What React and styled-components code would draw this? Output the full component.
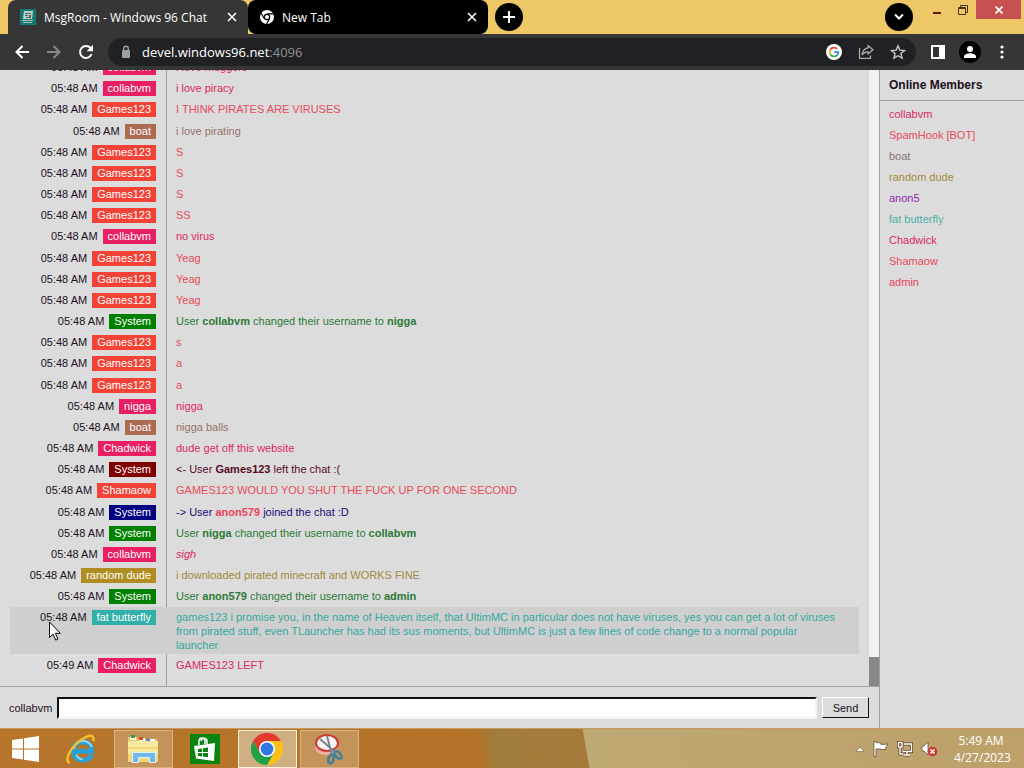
import React from 'react'
import styled, { createGlobalStyle } from 'styled-components'

const GlobalStyle = createGlobalStyle`
  * {
    box-sizing: border-box;
  }
  body {
    margin: 0;
    font-family: 'Liberation Sans', Arial, sans-serif;
    font-size: 11px;
    overflow: hidden;
  }
  button, input {
    font: inherit;
  }
`

const Screen = styled.div`
  display: flex;
  flex-direction: column;
  height: 100vh;
  background: #dcdcdc;
`

/* ---------- browser chrome ---------- */
const IconButton = styled.button`
  display: flex;
  align-items: center;
  justify-content: center;
  flex: none;
  width: ${({ $size }) => $size || 24}px;
  height: ${({ $size }) => $size || 24}px;
  padding: 0;
  border: none;
  border-radius: 50%;
  background: ${({ $filled }) => ($filled ? '#000' : 'transparent')};
  color: ${({ $color }) => $color || '#fff'};
`
const TabBar = styled.header`
  display: flex;
  flex: none;
  height: 34px;
  padding-left: 8px;
  background: #eec866;
`
const Tab = styled.div`
  display: flex;
  align-items: center;
  gap: 8px;
  width: 240px;
  height: 34px;
  padding: 0 4px 0 12px;
  border-radius: 8px 8px ${({ $active }) => ($active ? '0 0' : '8px 8px')};
  background: ${({ $active }) => ($active ? '#363636' : '#000')};
  color: #fff;
  font-family: 'Open Sans', 'Noto Sans', sans-serif;
  font-size: 12px;
`
const TabTitle = styled.span`
  flex: 1;
  white-space: nowrap;
`
const NewTab = styled.div`
  display: flex;
  align-items: center;
  padding-left: 7px;
`
const WindowButtons = styled.div`
  display: flex;
  align-items: flex-start;
  margin-left: auto;
  padding-right: 3px;
`
const SearchTabs = styled.div`
  padding: 3px 11px 0 0;
`
const WindowButton = styled.button`
  display: flex;
  align-items: center;
  justify-content: center;
  width: ${({ $close }) => ($close ? 45 : 26)}px;
  height: 19px;
  padding: 0;
  border: none;
  background: ${({ $close }) => ($close ? '#c75050' : 'transparent')};
`
const Toolbar = styled.nav`
  display: flex;
  align-items: center;
  flex: none;
  height: 36px;
  padding: 0 10px;
  gap: 8px;
  background: #363636;
`
const AddressBar = styled.div`
  display: flex;
  align-items: center;
  flex: 1;
  gap: 8px;
  height: 28px;
  margin: 0 2px;
  padding: 0 6px 0 10px;
  border-radius: 14px;
  background: #202124;
`
const Url = styled.span`
  flex: 1;
  color: #fff;
  font-family: 'Open Sans', 'Noto Sans', sans-serif;
  font-size: 13px;
  line-height: 28px;
`
const Port = styled.span`
  color: #8f9296;
`

/* ---------- chat page ---------- */
const Page = styled.main`
  display: flex;
  flex: 1;
  min-height: 0;
  color: #221022;
`
const Chat = styled.section`
  display: flex;
  flex-direction: column;
  flex: 1;
  min-width: 0;
  border-right: 1px solid #a0a0a0;
`
const LogArea = styled.div`
  display: flex;
  flex: 1;
  min-height: 0;
  border-bottom: 1px solid #a0a0a0;
`
const Log = styled.div`
  display: flex;
  flex-direction: column;
  justify-content: space-between;
  flex: 1;
  min-width: 0;
  overflow: hidden;
  padding: 0 10px;
  background: linear-gradient(
    to right,
    transparent 166px,
    #a0a0a0 166px,
    #a0a0a0 167px,
    transparent 167px
  );
`
const Row = styled.div`
  display: grid;
  grid-template-columns: 146px 1fr;
  column-gap: 20px;
  flex: none;
  align-items: start;
  background: ${({ $hover }) => ($hover ? '#cfcfcf' : 'transparent')};

  &:first-child {
    margin-top: -13px;
  }
  &:last-child {
    margin-bottom: 10px;
  }
`
const Meta = styled.div`
  display: flex;
  align-items: center;
  justify-content: flex-end;
  gap: 5px;
  padding: 3px 0;
  line-height: 15px;
  white-space: nowrap;
`
const Badge = styled.span`
  padding: 0 5px;
  background: ${({ $color }) => $color};
  color: #fff;
`
const Message = styled.div`
  padding: 3px 20px 2px 0;
  line-height: 14px;
  color: ${({ $color }) => $color};
`
const Name = styled.b`
  color: ${({ $color }) => $color || 'inherit'};
`
const ScrollTrack = styled.div`
  display: flex;
  flex-direction: column;
  justify-content: flex-end;
  width: 10px;
  background: #f1f1f1;
`
const ScrollThumb = styled.div`
  height: 29px;
  background: #888;
`
const Composer = styled.form`
  display: flex;
  align-items: center;
  flex: none;
  gap: 5px;
  height: 41px;
  padding: 0 10px 0 9px;
`
const TextBox = styled.input`
  flex: 1;
  min-width: 0;
  height: 22px;
  border: 2px solid;
  border-color: #111 #f4f4f4 #f4f4f4 #111;
  background: #fff;
`
const SendButton = styled.button`
  width: 47px;
  height: 21px;
  padding: 0;
  border: 1px solid;
  border-color: #fff #111 #111 #fff;
  background: #dcdcdc;
  color: #221022;
`
const Sidebar = styled.aside`
  flex: none;
  width: 144px;
`
const SidebarTitle = styled.h2`
  margin: 0;
  padding: 1px 9px 0;
  border-bottom: 1px solid #a0a0a0;
  font-size: 12px;
  line-height: 29px;
`
const Members = styled.ul`
  margin: 0;
  padding: 3px 9px;
  list-style: none;
  line-height: 21px;
`
const Member = styled.li`
  color: ${({ $color }) => $color};
`
const Cursor = styled.svg`
  position: absolute;
  left: 49px;
  top: 621px;
`

/* ---------- taskbar ---------- */
const Taskbar = styled.footer`
  display: flex;
  flex: none;
  height: 40px;
  border-top: 1px solid #c8985c;
  background: linear-gradient(
    80deg,
    #b5762b 0,
    #b3742a 475px,
    #a07c3a 490px,
    #a67a3a 580px,
    #bea873 581px,
    #bda06a 100%
  );
`
const TaskButton = styled.button`
  display: flex;
  align-items: center;
  justify-content: center;
  width: ${({ $width }) => $width || 62}px;
  padding: 0;
  border: none;
  background: transparent;
`
const TaskFrame = styled.span`
  display: flex;
  align-items: center;
  justify-content: center;
  width: 59px;
  height: 38px;
  border: 1px solid ${({ $active }) => ($active ? '#fff0d8' : '#d8b282')};
  background: ${({ $active }) => ($active ? '#cfae82' : '#c4935a')};
`
const Tray = styled.div`
  display: flex;
  align-items: center;
  gap: 8px;
  margin-left: auto;
  padding-right: 16px;
`
const Clock = styled.time`
  width: 54px;
  margin-left: 8px;
  color: #fff;
  font-family: 'Open Sans', 'Noto Sans', sans-serif;
  font-size: 12px;
  line-height: 17px;
  text-align: center;
  white-space: nowrap;
`

const pink = '#e91e63'
const red = '#f44336'
const brown = '#ab6a52'
const gold = '#b08d20'
const teal = '#2fb0a8'
const green = '#008000'

const textColors = {
  [pink]: '#dc2860',
  [red]: '#e84a5a',
  [brown]: '#98756a',
  [gold]: '#a38a3c',
  [teal]: '#35aa9e',
  [green]: '#2b7a38'
}

const messages = [
  { user: 'collabvm', color: pink, text: 'i love muggers' },
  { user: 'collabvm', color: pink, text: 'i love piracy' },
  { user: 'Games123', color: red, text: 'I THINK PIRATES ARE VIRUSES' },
  { user: 'boat', color: brown, text: 'i love pirating' },
  { user: 'Games123', color: red, text: 'S' },
  { user: 'Games123', color: red, text: 'S' },
  { user: 'Games123', color: red, text: 'S' },
  { user: 'Games123', color: red, text: 'SS' },
  { user: 'collabvm', color: pink, text: 'no virus' },
  { user: 'Games123', color: red, text: 'Yeag' },
  { user: 'Games123', color: red, text: 'Yeag' },
  { user: 'Games123', color: red, text: 'Yeag' },
  { user: 'System', color: green, text: <>User <Name>collabvm</Name> changed their username to <Name>nigga</Name></> },
  { user: 'Games123', color: red, text: 's' },
  { user: 'Games123', color: red, text: 'a' },
  { user: 'Games123', color: red, text: 'a' },
  { user: 'nigga', color: pink, text: 'nigga' },
  { user: 'boat', color: brown, text: 'nigga balls' },
  { user: 'Chadwick', color: pink, text: 'dude get off this website' },
  { user: 'System', color: '#800000', textColor: '#5a0a24', text: <>&lt;- User <Name>Games123</Name> left the chat :(</> },
  { user: 'Shamaow', color: red, text: 'GAMES123 WOULD YOU SHUT THE FUCK UP FOR ONE SECOND' },
  { user: 'System', color: '#000080', textColor: '#1a0a80', text: <>-&gt; User <Name $color="#f0405a">anon579</Name> joined the chat :D</> },
  { user: 'System', color: green, text: <>User <Name>nigga</Name> changed their username to <Name>collabvm</Name></> },
  { user: 'collabvm', color: pink, text: <i>sigh</i> },
  { user: 'random dude', color: gold, text: 'i downloaded pirated minecraft and WORKS FINE' },
  { user: 'System', color: green, text: <>User <Name>anon579</Name> changed their username to <Name>admin</Name></> },
  {
    user: 'fat butterfly',
    color: teal,
    hover: true,
    text: 'games123 i promise you, in the name of Heaven itself, that UltimMC in particular does not have viruses, yes you can get a lot of viruses from pirated stuff, even TLauncher has had its sus moments, but UltimMC is just a few lines of code change to a normal popular launcher'
  },
  { user: 'Chadwick', color: pink, time: '05:49 AM', text: 'GAMES123 LEFT' }
]

const members = [
  ['collabvm', '#dc2860'],
  ['SpamHook [BOT]', '#e84a5a'],
  ['boat', '#8a7474'],
  ['random dude', '#a38a3c'],
  ['anon5', '#9028b0'],
  ['fat butterfly', '#4cb0a4'],
  ['Chadwick', '#dc2860'],
  ['Shamaow', '#e84a5a'],
  ['admin', '#e8405a']
]

function CloseIcon() {
  return (
    <svg width="10" height="10" viewBox="0 0 10 10" stroke="currentColor" strokeWidth="1.6">
      <path d="M1 1l8 8M9 1l-8 8" />
    </svg>
  )
}

function BrowserTabs() {
  return (
    <TabBar>
      <Tab $active>
        <svg width="16" height="16" viewBox="0 0 16 16">
          <path fill="#127c74" d="M0 0h16v16H0z" />
          <path fill="#c3cecb" d="M4 2h9l-1 8H3z" />
          <path fill="#4e6562" d="M5 4h6v1H5zM5 6h3v1H5zM9 6h2v3H6V8h3z" />
          <path fill="#a9b8b5" d="M2 11h11v1H2zM3 13h9v1H3z" />
        </svg>
        <TabTitle>MsgRoom - Windows 96 Chat</TabTitle>
        <IconButton aria-label="Close tab"><CloseIcon /></IconButton>
      </Tab>
      <Tab>
        <svg width="14" height="14" viewBox="0 0 24 24">
          <circle cx="12" cy="12" r="12" fill="#fff" />
          <circle cx="12" cy="12" r="4.6" fill="#fff" stroke="#000" strokeWidth="2" />
          <path fill="none" stroke="#000" strokeWidth="2" d="M12 6.6h11M7.3 14.7L1.8 5.2M16.7 14.7L11.2 24" />
        </svg>
        <TabTitle>New Tab</TabTitle>
        <IconButton aria-label="Close tab"><CloseIcon /></IconButton>
      </Tab>
      <NewTab>
        <IconButton $size={28} $filled aria-label="New tab">
          <svg width="12" height="12" viewBox="0 0 12 12" stroke="#fff" strokeWidth="2">
            <path d="M6 0v12M0 6h12" />
          </svg>
        </IconButton>
      </NewTab>
      <WindowButtons>
        <SearchTabs>
          <IconButton $size={28} $filled aria-label="Search tabs">
            <svg width="10" height="8" viewBox="0 0 10 8" fill="none" stroke="#fff" strokeWidth="2">
              <path d="M1 1.5l4 4 4-4" />
            </svg>
          </IconButton>
        </SearchTabs>
        <WindowButton aria-label="Minimize">
          <svg width="8" height="14"><path fill="#5b1c14" d="M0 9h8v2H0z" /></svg>
        </WindowButton>
        <WindowButton aria-label="Restore">
          <svg width="10" height="10" viewBox="0 0 10 10" fill="none" stroke="#4a3210">
            <path d="M.5 2.5h7v7h-7zM2.5 2V.5h7v7H8M1 3.5h6" />
          </svg>
        </WindowButton>
        <WindowButton $close aria-label="Close">
          <svg width="8" height="8" viewBox="0 0 8 8" stroke="#fff" strokeWidth="1.6">
            <path d="M.5.5l7 7M7.5.5l-7 7" />
          </svg>
        </WindowButton>
      </WindowButtons>
    </TabBar>
  )
}

function BrowserToolbar() {
  return (
    <Toolbar>
      <IconButton aria-label="Back">
        <svg width="14" height="14" viewBox="0 0 14 14" fill="none" stroke="#fff" strokeWidth="2">
          <path d="M14 7H1.5M7.5 1l-6 6 6 6" />
        </svg>
      </IconButton>
      <IconButton aria-label="Forward">
        <svg width="14" height="14" viewBox="0 0 14 14" fill="none" stroke="#888" strokeWidth="2">
          <path d="M0 7h12.5M6.5 1l6 6-6 6" />
        </svg>
      </IconButton>
      <IconButton aria-label="Reload">
        <svg width="16" height="16" viewBox="0 0 16 16" fill="none" stroke="#fff" strokeWidth="2">
          <path d="M13.6 10.2A6 6 0 1 1 12.6 4l1.4 1.6" />
          <path fill="#fff" stroke="none" d="M15 .8v6.4H8.6z" />
        </svg>
      </IconButton>
      <AddressBar>
        <svg width="16" height="16" viewBox="0 0 16 16">
          <path fill="#9aa0a6" d="M5 6h6a1 1 0 0 1 1 1v6a1 1 0 0 1-1 1H5a1 1 0 0 1-1-1V7a1 1 0 0 1 1-1z" />
          <path fill="none" stroke="#9aa0a6" strokeWidth="1.4" d="M5.7 6.5V4.6a2.3 2.3 0 0 1 4.6 0v1.9" />
        </svg>
        <Url>devel.windows96.net<Port>:4096</Port></Url>
        <IconButton aria-label="Search with Google">
          <svg width="16" height="16" viewBox="0 0 16 16" fill="none" strokeWidth="1.8">
            <circle cx="8" cy="8" r="8" fill="#fff" />
            <path stroke="#ea4335" d="M11.2 5A4.4 4.4 0 0 0 4.2 5.8" />
            <path stroke="#fbbc05" d="M4.2 5.8A4.4 4.4 0 0 0 4.2 10.2" />
            <path stroke="#34a853" d="M4.2 10.2A4.4 4.4 0 0 0 10.9 11.3" />
            <path stroke="#4285f4" d="M10.9 11.3A4.4 4.4 0 0 0 12.4 8.2H8.2" />
          </svg>
        </IconButton>
        <IconButton aria-label="Share">
          <svg width="16" height="16" viewBox="0 0 16 16" fill="none" stroke="#a8abb0" strokeWidth="1.3">
            <path d="M1.5 4v10.300h11V11.500" />
            <path strokeLinejoin="round" d="M10 1.500l5 4.300-5 4.300V7.800c-2.600 0-4.300.8-5.800 2.900C4.600 7 6.600 4.400 10 3.900z" />
          </svg>
        </IconButton>
        <IconButton aria-label="Bookmark">
          <svg width="16" height="16" viewBox="0 0 16 16" fill="none" stroke="#c4c7cc" strokeWidth="1.4">
            <path d="M8 1.8l1.8 4.3 4.7.4-3.600 3 1.100 4.600L8 11.700l-4 2.400 1.100-4.600-3.600-3 4.700-.4z" />
          </svg>
        </IconButton>
      </AddressBar>
      <IconButton aria-label="Side panel">
        <svg width="14" height="14" viewBox="0 0 14 14">
          <path fill="#fff" fillRule="evenodd" d="M0 0h14v14H0zM2 2v10h6V2z" />
        </svg>
      </IconButton>
      <IconButton aria-label="Profile">
        <svg width="22" height="22" viewBox="0 0 22 22">
          <circle cx="11" cy="11" r="11" fill="#000" />
          <circle cx="11" cy="8" r="3" fill="#fff" />
          <path fill="#fff" d="M5 17v-1.500c0-2.200 4-3.300 6-3.300s6 1.100 6 3.300V17z" />
        </svg>
      </IconButton>
      <IconButton aria-label="Menu">
        <svg width="4" height="14" viewBox="0 0 4 14" fill="#fff">
          <circle cx="2" cy="2" r="1.6" />
          <circle cx="2" cy="7" r="1.6" />
          <circle cx="2" cy="12" r="1.6" />
        </svg>
      </IconButton>
    </Toolbar>
  )
}

function ChatPage() {
  return (
    <Page>
      <Chat>
        <LogArea>
          <Log>
            {messages.map((m, i) => (
              <Row key={i} $hover={m.hover}>
                <Meta>
                  <span>{m.time || '05:48 AM'}</span>
                  <Badge $color={m.color}>{m.user}</Badge>
                </Meta>
                <Message $color={m.textColor || textColors[m.color]}>{m.text}</Message>
              </Row>
            ))}
          </Log>
          <ScrollTrack>
            <ScrollThumb />
          </ScrollTrack>
        </LogArea>
        <Composer onSubmit={(e) => e.preventDefault()}>
          <label htmlFor="message">collabvm</label>
          <TextBox id="message" type="text" autoComplete="off" />
          <SendButton type="submit">Send</SendButton>
        </Composer>
      </Chat>
      <Sidebar>
        <SidebarTitle>Online Members</SidebarTitle>
        <Members>
          {members.map(([name, color]) => (
            <Member key={name} $color={color}>{name}</Member>
          ))}
        </Members>
      </Sidebar>
    </Page>
  )
}

function WindowsTaskbar() {
  return (
    <Taskbar>
      <TaskButton $width={50} aria-label="Start">
        <svg width="27" height="26" viewBox="0 0 27 26" fill="#fff">
          <path d="M0 4l11-1.600V12.500H0zM12 2.200L27 0v12.500H12zM0 13.500h11v10.100L0 22zM12 13.500h15V26l-15-2.200z" />
        </svg>
      </TaskButton>
      <TaskButton aria-label="Internet Explorer">
        <svg width="32" height="32" viewBox="0 0 34 32" fill="none">
          <path stroke="#2a9fd8" strokeWidth="5" d="M28.500 22C26.500 26 23 28 19 28c-6 0-10-4-10-10S13 8.500 19 8.500c6 0 9.500 4 9.500 10H11" />
          <path stroke="#8fdcf6" strokeWidth="2" d="M9 16c1-5 5-8.500 10-8.500 4.500 0 8 2.500 9.500 6.500M12 22c1.500 3.500 4 5 7 5" />
          <path stroke="#f5c22c" strokeWidth="2.600" d="M5 30.500C0 29 3 20 11 11.500S28 0 30 3.500c.6 1 .4 2.500-.2 4" />
        </svg>
      </TaskButton>
      <TaskButton aria-label="File Explorer">
        <TaskFrame>
          <svg width="32" height="30" viewBox="0 0 32 30">
            <path fill="#e9c861" d="M1 3h9l1 2h19v22H1z" />
            <path fill="#fff" d="M3 3h6v3H3zM12 4h6v3h-6zM20 5h8v3h-8z" />
            <path fill="#37a04a" d="M4 1h4v3H4z" />
            <path fill="#d6492e" d="M12 3h4v3h-4z" />
            <path fill="#3f8ed4" d="M19 5h4v3h-4z" />
            <path fill="#f8e9a0" d="M1 7h30v21H1z" />
            <path fill="#f0d878" d="M1 13h30v2H1zM1 20h30v8H1z" />
            <path fill="#70b8e8" stroke="#e0f3ff" d="M5.500 18.500h23v10h-6v-5h-11v5h-6z" />
          </svg>
        </TaskFrame>
      </TaskButton>
      <TaskButton aria-label="Store">
        <svg width="30" height="30" viewBox="0 0 30 30">
          <path fill="#0a8310" d="M0 0h30v30H0z" />
          <path fill="none" stroke="#fff" strokeWidth="1.500" d="M9 11V7c0-4 6-4 6 0v3M11 7c1-4 6-3 6 0v3" />
          <path fill="#fff" d="M4 12l21-3-1 18-18-2.500z" />
          <path fill="#0a8310" d="M8 15l4-.5V18H8zM13 14.300l5-.7V18h-5zM8 19h4v3.500L8 22zM13 19h5v4.300l-5-.7z" />
        </svg>
      </TaskButton>
      <TaskButton aria-label="Google Chrome">
        <TaskFrame $active>
          <svg width="32" height="32" viewBox="0 0 32 32">
            <path fill="#fbc116" d="M16 8h13.900A16 16 0 0 1 16 32l7-12z" />
            <path fill="#22a045" d="M22.900 20L16 32A16 16 0 0 1 2.100 8l7 12z" />
            <path fill="#e33b2e" d="M9.100 20L2.100 8A16 16 0 0 1 29.900 8H16z" />
            <circle cx="16" cy="16" r="8" fill="#fff" />
            <circle cx="16" cy="16" r="6.400" fill="#2f78e4" />
          </svg>
        </TaskFrame>
      </TaskButton>
      <TaskButton aria-label="Snipping Tool">
        <TaskFrame>
          <svg width="30" height="32" viewBox="0 0 30 32" fill="none">
            <ellipse cx="12" cy="15" rx="11" ry="7" fill="#eeb0a0" />
            <ellipse cx="13" cy="10" rx="11" ry="8" fill="#fbf4f2" stroke="#c83a34" strokeWidth="2" />
            <path stroke="#76848f" strokeWidth="2" d="M6 6l15 13M13 3l5 19" />
            <ellipse cx="24" cy="22" rx="2.500" ry="4.500" transform="rotate(-42 24 22)" stroke="#44809c" strokeWidth="2.600" />
            <ellipse cx="17" cy="26" rx="2.500" ry="4.500" transform="rotate(15 17 26)" stroke="#44809c" strokeWidth="2.600" />
          </svg>
        </TaskFrame>
      </TaskButton>
      <Tray>
        <svg width="10" height="6" viewBox="0 0 10 6">
          <path fill="#fff" stroke="#7d5a38" strokeWidth=".6" d="M1 5.500L5 1l4 4.500z" />
        </svg>
        <svg width="16" height="16" viewBox="0 0 16 16">
          <path fill="#fff" stroke="#5a4028" strokeWidth=".7" d="M1 .5h2v1l5 .5v1.500l7-.5-2.500 3.500.5 2H8V8H3v7.500H1z" />
        </svg>
        <svg width="16" height="16" viewBox="0 0 16 16" fill="none">
          <path stroke="#5a4028" strokeWidth="3" d="M7 3h7.500v7.500H6M10 11v3M6.500 14h7M3 7v6h3M1.500 1.500h3.500V6H1.500z" />
          <path stroke="#fff" strokeWidth="1.400" d="M7 3h7.500v7.500H6M10 11v3M6.500 14h7M3 7v6h3M1.500 1.500h3.500V6H1.500z" />
        </svg>
        <svg width="17" height="16" viewBox="0 0 17 16">
          <path fill="#fff" stroke="#5a4028" strokeWidth=".7" d="M1 5h2l4-4v13l-4-4H1z" />
          <circle cx="11.500" cy="10.500" r="4.800" fill="#cc3a34" />
          <path stroke="#fff" strokeWidth="1.600" d="M9.500 8.500l4 4M13.500 8.500l-4 4" />
        </svg>
        <Clock>
          5:49 AM
          <br />
          4/27/2023
        </Clock>
      </Tray>
    </Taskbar>
  )
}

export default function App() {
  return (
    <Screen>
      <GlobalStyle />
      <BrowserTabs />
      <BrowserToolbar />
      <ChatPage />
      <WindowsTaskbar />
      <Cursor width="12" height="20" viewBox="0 0 12 20">
        <path fill="#fff" stroke="#000" d="M.5 1v15.500l3.600-3.400 2.600 6 2.200-1-2.500-5.800h5z" />
      </Cursor>
    </Screen>
  )
}
